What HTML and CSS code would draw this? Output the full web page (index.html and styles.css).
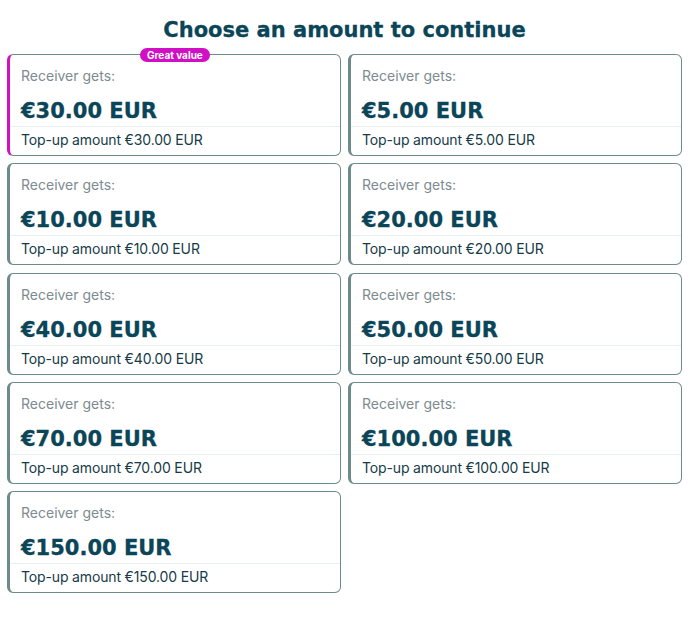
FILE: index.html
```html
<!DOCTYPE html>
<html>
<head>
<meta charset="utf-8">
<link rel="stylesheet" href="styles.css">
</head>
<body>
<div class="page">
  <h1 class="title">Choose an amount to continue</h1>
  <div class="grid">
    <div class="card featured">
      <span class="badge">Great value</span>
      <div class="top"><div class="label">Receiver gets:</div><div class="amount">€30.00 EUR</div></div>
      <div class="bottom">Top-up amount €30.00 EUR</div>
    </div>
    <div class="card">
      <div class="top"><div class="label">Receiver gets:</div><div class="amount">€5.00 EUR</div></div>
      <div class="bottom">Top-up amount €5.00 EUR</div>
    </div>
    <div class="card">
      <div class="top"><div class="label">Receiver gets:</div><div class="amount">€10.00 EUR</div></div>
      <div class="bottom">Top-up amount €10.00 EUR</div>
    </div>
    <div class="card">
      <div class="top"><div class="label">Receiver gets:</div><div class="amount">€20.00 EUR</div></div>
      <div class="bottom">Top-up amount €20.00 EUR</div>
    </div>
    <div class="card">
      <div class="top"><div class="label">Receiver gets:</div><div class="amount">€40.00 EUR</div></div>
      <div class="bottom">Top-up amount €40.00 EUR</div>
    </div>
    <div class="card">
      <div class="top"><div class="label">Receiver gets:</div><div class="amount">€50.00 EUR</div></div>
      <div class="bottom">Top-up amount €50.00 EUR</div>
    </div>
    <div class="card">
      <div class="top"><div class="label">Receiver gets:</div><div class="amount">€70.00 EUR</div></div>
      <div class="bottom">Top-up amount €70.00 EUR</div>
    </div>
    <div class="card">
      <div class="top"><div class="label">Receiver gets:</div><div class="amount">€100.00 EUR</div></div>
      <div class="bottom">Top-up amount €100.00 EUR</div>
    </div>
    <div class="card">
      <div class="top"><div class="label">Receiver gets:</div><div class="amount">€150.00 EUR</div></div>
      <div class="bottom">Top-up amount €150.00 EUR</div>
    </div>
  </div>
</div>
</body>
</html>
```
FILE: styles.css
```css
* { box-sizing: border-box; }
body {
  margin: 0;
  background: #ffffff;
  font-family: Inter, "Liberation Sans", sans-serif;
}
.page {
  padding: 16px 18px 0 7px;
}
.title {
  margin: 0 0 10px 0;
  text-align: center;
  font-family: "DejaVu Sans", sans-serif;
  font-weight: 700;
  font-size: 21px;
  line-height: 28px;
  color: #0b4558;
  -webkit-text-stroke: 0.3px #0b4558;
}
.grid {
  display: grid;
  grid-template-columns: 334px 334px;
  column-gap: 7px;
  row-gap: 7.25px;
}
.card {
  position: relative;
  height: 102px;
  border: 1px solid #6e8b8b;
  border-left-width: 3px;
  border-radius: 6px;
  background: #fff;
}
.card.featured {
  border-left-color: #d10fc4;
}
.badge {
  position: absolute;
  top: -7px;
  left: 130px;
  height: 14px;
  padding: 0 7px;
  border-radius: 7px;
  background: #d10fc4;
  color: #fff;
  font-size: 10px;
  font-weight: 700;
  line-height: 14px;
  white-space: nowrap;
}
.top {
  padding: 12px 11px 1px 11px;
  border-bottom: 1px solid #e8eff1;
}
.label {
  font-size: 14px;
  line-height: 18px;
  color: #7d8b90;
}
.amount {
  margin-top: 12px;
  font-family: "DejaVu Sans", sans-serif;
  font-weight: 700;
  font-size: 21px;
  line-height: 28px;
  color: #0b4558;
  -webkit-text-stroke: 0.3px #0b4558;
}
.bottom {
  padding: 3px 11px 2px 11px;
  font-size: 14px;
  line-height: 20px;
  letter-spacing: -0.15px;
  color: #163b47;
}
```
